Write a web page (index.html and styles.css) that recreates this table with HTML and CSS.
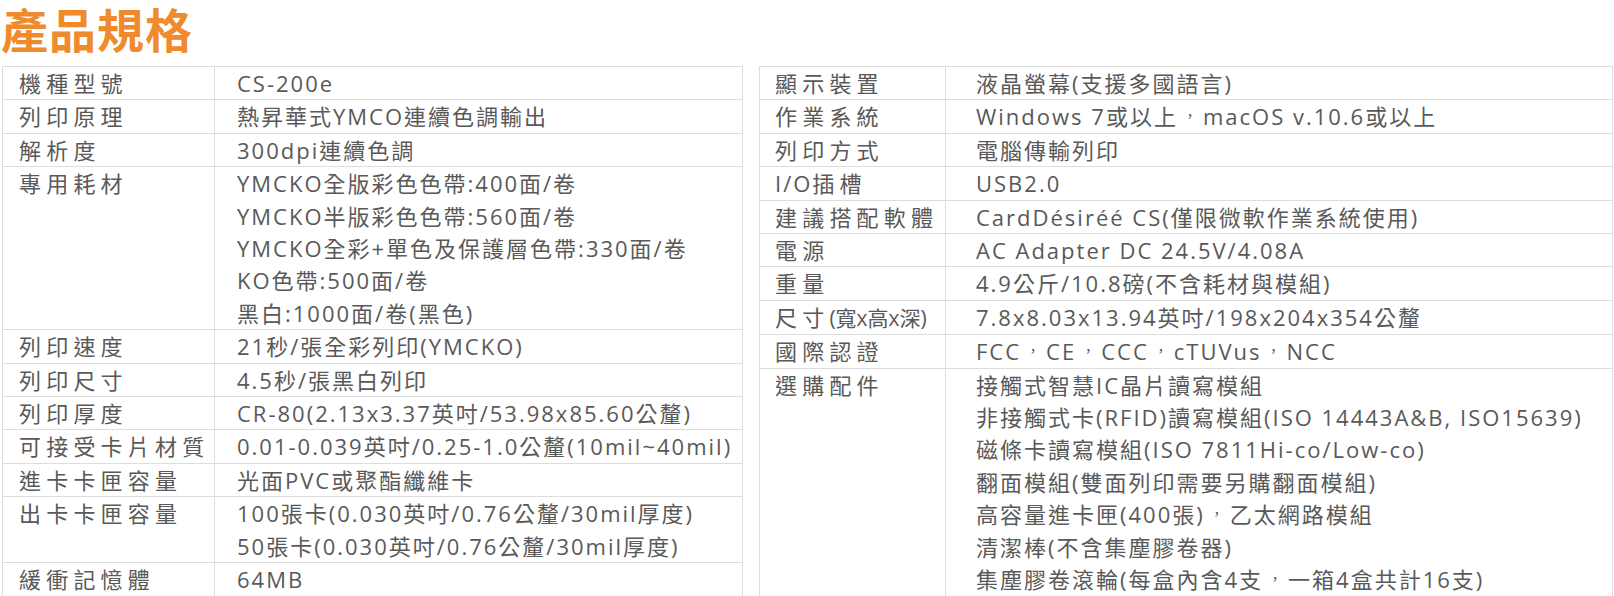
FILE: index.html
```html
<!DOCTYPE html>
<html lang="zh-Hant">
<head>
<meta charset="utf-8">
<title>產品規格</title>
<link rel="stylesheet" href="styles.css">
</head>
<body>
<div class="page">
  <h1 class="title">產品規格</h1>
  <div class="tables">
    <table class="spec spec-left">
      <colgroup><col class="c-label"><col></colgroup>
      <tbody>
        <tr><th>機種型號</th><td>CS-200e</td></tr>
        <tr><th>列印原理</th><td>熱昇華式YMCO連續色調輸出</td></tr>
        <tr><th>解析度</th><td>300dpi連續色調</td></tr>
        <tr><th>專用耗材</th><td>YMCKO全版彩色色帶:400面/卷<br>YMCKO半版彩色色帶:560面/卷<br>YMCKO全彩+單色及保護層色帶:330面/卷<br>KO色帶:500面/卷<br>黑白:1000面/卷(黑色)</td></tr>
        <tr><th>列印速度</th><td>21秒/張全彩列印(YMCKO)</td></tr>
        <tr><th>列印尺寸</th><td>4.5秒/張黑白列印</td></tr>
        <tr><th>列印厚度</th><td>CR-80(2.13x3.37英吋/53.98x85.60公釐)</td></tr>
        <tr><th>可接受卡片材質</th><td>0.01-0.039英吋/0.25-1.0公釐(10mil~40mil)</td></tr>
        <tr><th>進卡卡匣容量</th><td>光面PVC或聚酯纖維卡</td></tr>
        <tr><th>出卡卡匣容量</th><td>100張卡(0.030英吋/0.76公釐/30mil厚度)<br>50張卡(0.030英吋/0.76公釐/30mil厚度)</td></tr>
        <tr><th>緩衝記憶體</th><td>64MB</td></tr>
      </tbody>
    </table>
    <table class="spec spec-right">
      <colgroup><col class="c-label"><col></colgroup>
      <tbody>
        <tr><th>顯示裝置</th><td>液晶螢幕(支援多國語言)</td></tr>
        <tr><th>作業系統</th><td>Windows 7或以上<span class="punct">，</span>macOS v.10.6或以上</td></tr>
        <tr><th>列印方式</th><td>電腦傳輸列印</td></tr>
        <tr><th><span class="latin">I/O</span>插槽</th><td>USB2.0</td></tr>
        <tr><th>建議搭配軟體</th><td>CardDésiréé CS(僅限微軟作業系統使用)</td></tr>
        <tr><th>電源</th><td>AC Adapter DC 24.5V/4.08A</td></tr>
        <tr><th>重量</th><td>4.9公斤/10.8磅(不含耗材與模組)</td></tr>
        <tr><th>尺寸<span class="paren">(寬x高x深)</span></th><td>7.8x8.03x13.94英吋/198x204x354公釐</td></tr>
        <tr><th>國際認證</th><td>FCC<span class="punct">，</span>CE<span class="punct">，</span>CCC<span class="punct">，</span>cTUVus<span class="punct">，</span>NCC</td></tr>
        <tr><th>選購配件</th><td>接觸式智慧IC晶片讀寫模組<br>非接觸式卡(RFID)讀寫模組(ISO 14443A&amp;B, ISO15639)<br>磁條卡讀寫模組(ISO 7811Hi-co/Low-co)<br>翻面模組(雙面列印需要另購翻面模組)<br>高容量進卡匣(400張)<span class="punct">，</span>乙太網路模組<br>清潔棒(不含集塵膠卷器)<br>集塵膠卷滾輪(每盒內含4支<span class="punct">，</span>一箱4盒共計16支)</td></tr>
      </tbody>
    </table>
  </div>
</div>
</body>
</html>
```

FILE: styles.css
```css
html, body {
  margin: 0;
  padding: 0;
  background: #ffffff;
}

.page {
  font-family: "Open Sans", "Noto Sans CJK TC", sans-serif;
  color: #595959;
}

.title {
  margin: 0;
  padding: 0 0 0 1px;
  height: 66px;
  font-family: "Noto Sans CJK TC", sans-serif;
  font-size: 47px;
  line-height: 56px;
  font-weight: 700;
  color: #ef8a2d;
  letter-spacing: 1px;
}

.tables {
  display: flex;
  align-items: stretch;
  gap: 16px;
  padding: 0 1px 0 2px;
}

.spec {
  border-collapse: collapse;
  table-layout: fixed;
  font-size: 22px;
  line-height: 32.4px;
}

.spec-left {
  flex: 0 0 741px;
  width: 741px;
}

.spec-right {
  flex: 0 0 854px;
  width: 854px;
}

.spec-left .c-label {
  width: 212px;
}

.spec-right .c-label {
  width: 186px;
}

.spec th,
.spec td {
  border: 1px solid #dddddd;
  padding: 0;
  text-align: left;
  vertical-align: top;
  font-weight: 400;
  white-space: nowrap;
}

.spec th {
  letter-spacing: 5.2px;
  padding-left: 16px;
}

.spec td {
  letter-spacing: 2px;
}

.spec-left td {
  padding-left: 22px;
}

.spec-right th {
  padding-left: 15px;
}

.spec-right td {
  padding-left: 30px;
}

.paren {
  font-size: 21px;
  letter-spacing: 0;
}

.latin {
  letter-spacing: 2px;
}

.punct {
  display: inline-block;
  box-sizing: border-box;
  width: 25px;
  padding-left: 5px;
  overflow: visible;
  text-align: left;
  font-size: 14px;
  line-height: 0;
  vertical-align: 4px;
  letter-spacing: 0;
}
```
